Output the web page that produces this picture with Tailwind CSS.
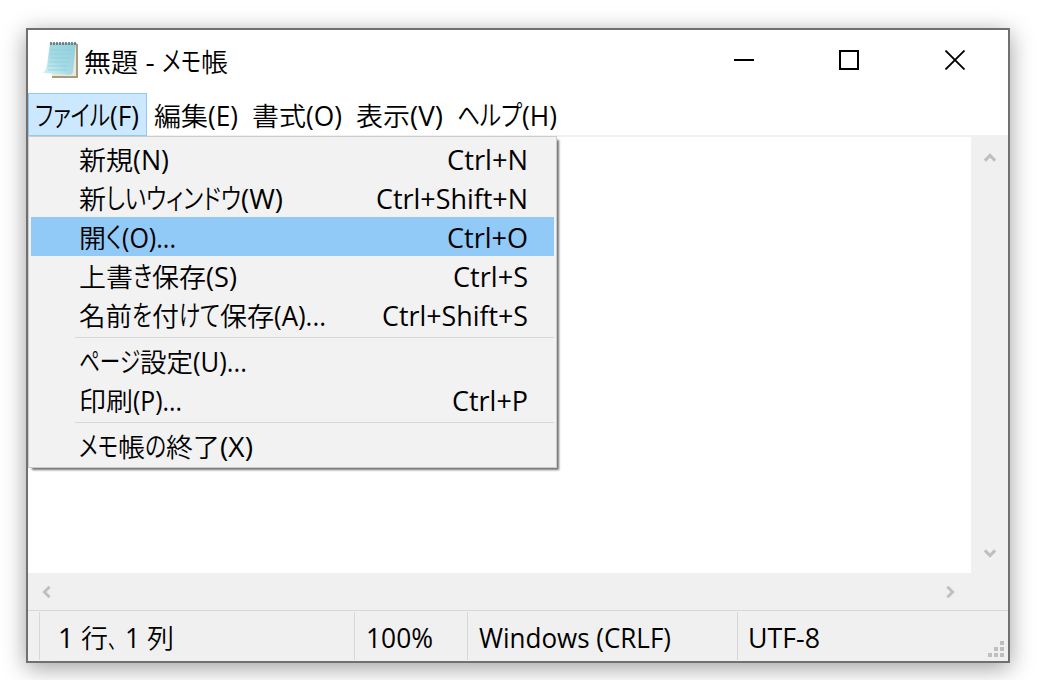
<!DOCTYPE html>
<html lang="ja">
<head>
<meta charset="utf-8">
<title>無題 - メモ帳</title>
<script src="https://cdn.jsdelivr.net/npm/@tailwindcss/browser@4"></script>
</head>
<body class="h-[680px] w-[1037px] overflow-hidden bg-white pl-[26px] pt-[28px] font-['Open_Sans','Noto_Sans_CJK_JP',sans-serif] text-[26.5px] font-normal text-black">
<div class="relative flex h-[635px] w-[984px] flex-col border-2 border-[#707070] bg-white shadow-[0_5px_22px_rgba(0,0,0,0.38)]">
  <header class="flex h-[63px] shrink-0 items-start">
    <svg class="ml-[14px] mt-[10px] h-[40px] w-[38px]" viewBox="0 0 38 40">
      <defs>
        <linearGradient id="pad" x1="1" y1="0" x2="0" y2="1"><stop offset="0" stop-color="#8fcfdb"/><stop offset=".55" stop-color="#a5dbe5"/><stop offset="1" stop-color="#d5f2f6"/></linearGradient>
      </defs>
      <path d="M33 3l3 1v34H10v-2z" fill="#a99b82"/>
      <path d="M32 3h2v33H9l2-3z" fill="#eee7d8"/>
      <path d="M8 3h26l-3 29q-1 3-3 3L1 33q4-3 5-15z" fill="url(#pad)"/>
      <path d="M9 10h21M8 14h21M8 18h20M7 22h20M6 26h20M6 30h19" stroke="#8ccbd7" stroke-width=".7"/>
      <path d="M9 2v3M12 2v3M15 2v3M18 2v3M21 2v3M24 2v3M27 2v3M30 2v3M33 2v3" stroke="#58666a" stroke-width="1.500"/>
    </svg>
    <div data-label class="ml-[4px] flex h-[63px] items-baseline whitespace-pre pt-[13px] leading-[39px]"><span data-w="54">無題</span><span data-w="24"> - </span><span data-w="39">メモ</span><span data-w="27">帳</span></div>
    <svg class="ml-auto mr-[43px] mt-[20px] h-[20px] w-[231px]" viewBox="0 0 231 20" fill="none" stroke="#000" stroke-width="2">
      <path d="M0 10h20M106 1h18v18h-18z"/><path d="M211.500 .5l19 19m0-19l-19 19" stroke-width="1.800"/>
    </svg>
  </header>
  <nav class="flex h-[44px] shrink-0 border-b-2 border-[#f0f0f0] leading-[39px]">
    <div class="h-[43px] w-[119px] border border-[#90c8f6] bg-[#cce8ff] pl-[6px] pt-[3px]"><div data-label class="flex items-baseline"><span data-w="75">ファイル</span><span data-w="29">(F)</span></div></div>
    <div data-label class="ml-[7px] flex w-[92px] items-baseline pt-[4px]"><span data-w="54">編集</span><span data-w="30">(E)</span></div>
    <div data-label class="ml-[6px] flex w-[97px] items-baseline pt-[4px]"><span data-w="54">書式</span><span data-w="36">(O)</span></div>
    <div data-label class="ml-[7px] flex w-[94px] items-baseline pt-[4px]"><span data-w="54">表示</span><span data-w="33">(V)</span></div>
    <div data-label class="ml-[7px] flex items-baseline pt-[4px]"><span data-w="65">ヘルプ</span><span data-w="35">(H)</span></div>
  </nav>
  <main class="flex h-[436px] shrink-0">
    <div class="flex-1 bg-white"></div>
    <div class="flex w-[37px] flex-col items-center justify-between bg-[#f0f0f0] pb-[15px] pt-[16px]">
      <svg class="h-[9px] w-[12px]" viewBox="0 0 12 9" fill="none" stroke="#bfbfbf" stroke-width="3"><path d="M.8 7.600L6 2.400l5.200 5.200"/></svg>
      <svg class="h-[9px] w-[12px]" viewBox="0 0 12 9" fill="none" stroke="#bfbfbf" stroke-width="3"><path d="M.8 1.400L6 6.600l5.200-5.200"/></svg>
    </div>
  </main>
  <div class="flex h-[37px] shrink-0 items-center justify-between bg-[#f0f0f0] pl-[14px] pr-[53px]">
    <svg class="h-[12px] w-[9px]" viewBox="0 0 9 12" fill="none" stroke="#bfbfbf" stroke-width="3"><path d="M7.600 .8L2.400 6l5.200 5.200"/></svg>
    <svg class="h-[12px] w-[9px]" viewBox="0 0 9 12" fill="none" stroke="#bfbfbf" stroke-width="3"><path d="M1.400 .8L6.600 6l-5.200 5.200"/></svg>
  </div>
  <footer class="flex flex-1 items-start border-t border-[#d7d7d7] bg-[#f0f0f0] pl-[11px] pt-px leading-[39px]">
    <div class="h-[48px] w-[315px] border-l border-[#d7d7d7] pl-[18px] pt-[7px]"><div data-label class="flex items-baseline whitespace-pre"><span data-w="23">1 </span><span data-w="27">行</span><span data-w="17">、</span><span data-w="22">1 </span><span data-w="27">列</span></div></div>
    <div class="h-[48px] w-[113px] border-l border-[#d7d7d7] pl-[11px] pt-[7px]"><div data-label class="flex items-baseline"><span data-w="67">100%</span></div></div>
    <div class="h-[48px] w-[270px] border-l border-[#d7d7d7] pl-[11px] pt-[7px]"><div data-label class="flex items-baseline"><span data-w="192">Windows (CRLF)</span></div></div>
    <div class="h-[48px] border-l border-[#d7d7d7] pl-[10px] pt-[7px]"><div data-label class="flex items-baseline"><span data-w="72">UTF-8</span></div></div>
    <svg class="ml-auto mr-[4px] mt-[29px] h-[16px] w-[16px]" viewBox="0 0 16 16" fill="#bfbfbf"><path d="M12 0h4v4h-4zM6 6h4v4H6zM12 6h4v4h-4zM0 12h4v4H0zM6 12h4v4H6zM12 12h4v4h-4z"/></svg>
  </footer>

  <div class="absolute left-0 top-[106px] h-[332px] w-[529px] border border-[#cccccc] bg-[#f2f2f2] p-[2px] leading-[43px] shadow-[3px_3px_2px_-1px_rgba(0,0,0,0.55)]">
    <div class="flex h-[39px] justify-between pl-[48px] pr-[26px]"><div data-label class="flex items-baseline"><span data-w="54">新規</span><span data-w="36">(N)</span></div><div data-label class="flex items-baseline"><span data-w="81">Ctrl+N</span></div></div>
    <div class="flex h-[39px] justify-between pl-[48px] pr-[26px]"><div data-label class="flex items-baseline"><span data-w="27">新</span><span data-w="135">しいウィンドウ</span><span data-w="42">(W)</span></div><div data-label class="flex items-baseline"><span data-w="152">Ctrl+Shift+N</span></div></div>
    <div class="flex h-[39px] justify-between bg-[#91c9f7] pl-[48px] pr-[26px]"><div data-label class="flex items-baseline"><span data-w="27">開</span><span data-w="16">く</span><span data-w="54">(O)...</span></div><div data-label class="flex items-baseline"><span data-w="81">Ctrl+O</span></div></div>
    <div class="flex h-[39px] justify-between pl-[48px] pr-[26px]"><div data-label class="flex items-baseline"><span data-w="54">上書</span><span data-w="19">き</span><span data-w="54">保存</span><span data-w="31">(S)</span></div><div data-label class="flex items-baseline"><span data-w="75">Ctrl+S</span></div></div>
    <div class="flex h-[39px] justify-between pl-[48px] pr-[26px]"><div data-label class="flex items-baseline"><span data-w="53">名前</span><span data-w="20">を</span><span data-w="27">付</span><span data-w="41">けて</span><span data-w="54">保存</span><span data-w="52">(A)...</span></div><div data-label class="flex items-baseline"><span data-w="146">Ctrl+Shift+S</span></div></div>
    <div class="ml-[44px] flex h-[7px] items-center"><div class="h-px w-full bg-[#d7d7d7]"></div></div>
    <div class="flex h-[39px] pl-[48px]"><div data-label class="flex items-baseline"><span data-w="61">ページ</span><span data-w="53">設定</span><span data-w="54">(U)...</span></div></div>
    <div class="flex h-[39px] justify-between pl-[48px] pr-[26px]"><div data-label class="flex items-baseline"><span data-w="54">印刷</span><span data-w="49">(P)...</span></div><div data-label class="flex items-baseline"><span data-w="76">Ctrl+P</span></div></div>
    <div class="ml-[44px] flex h-[7px] items-center"><div class="h-px w-full bg-[#d7d7d7]"></div></div>
    <div class="flex h-[39px] pl-[48px]"><div data-label class="flex items-baseline"><span data-w="39">メモ</span><span data-w="27">帳</span><span data-w="21">の</span><span data-w="54">終了</span><span data-w="33">(X)</span></div></div>
  </div>
</div>
<script>
document.querySelectorAll('[data-label] > span').forEach(s => {
  const st = s.style;
  st.display = 'inline-block';
  st.whiteSpace = 'pre';
  st.flexShrink = '0';
  st.fontFamily = '"Open Sans","Noto Sans CJK JP",sans-serif';
  st.fontSize = '26.5px';
  if (/^[^\x00-\x7f]/.test(s.textContent)) {
    st.fontWeight = '350';
    if (/[\u3040-\u30ff]/.test(s.textContent)) {
      st.fontFeatureSettings = '"palt"';
      st.fontSize = '28px';
      st.lineHeight = '30px';
    }
  }
  const natural = s.getBoundingClientRect().width, w = +s.dataset.w;
  st.transformOrigin = '0 0';
  st.transform = `scaleX(${w / natural})`;
  st.marginRight = (w - natural) + 'px';
});
</script>
</body>
</html>
